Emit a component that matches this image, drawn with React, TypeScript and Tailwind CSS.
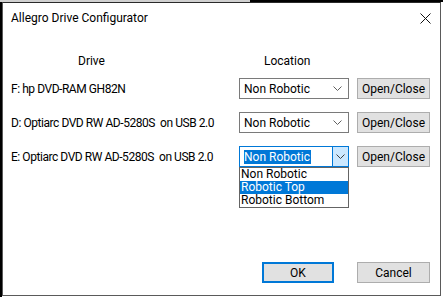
import React from 'react';

const drives = [
  { label: 'F: hp DVD-RAM GH82N', open: false },
  { label: 'D: Optiarc DVD RW AD-5280S  on USB 2.0', open: false },
  { label: 'E: Optiarc DVD RW AD-5280S  on USB 2.0', open: true },
];

const options = ['Non Robotic', 'Robotic Top', 'Robotic Bottom'];

function Chevron({ color = '#606060' }: { color?: string }) {
  return (
    <svg width="9" height="5" viewBox="0 0 9 5" fill="none">
      <path d="M0.5 0.5 L4.5 4.5 L8.5 0.5" stroke={color} strokeWidth="1" />
    </svg>
  );
}

function Combo({ open }: { open: boolean }) {
  if (!open) {
    return (
      <div className="w-[110px] h-[21px] border border-[#7a7a7a] bg-white flex items-center justify-between pl-[4px] pr-[6px]">
        <span>Non Robotic</span>
        <Chevron />
      </div>
    );
  }
  return (
    <div className="relative w-[110px] h-[21px]">
      <div className="w-full h-full border border-[#0078d7] bg-white flex items-center">
        <div className="flex-1 pl-[4px] flex items-center">
          <span className="bg-[#0078d7] text-white leading-[14px] pr-[1px]">Non Robotic</span>
        </div>
        <div className="w-[16px] h-full bg-[#cce8ff] border-l border-[#0078d7] flex items-center justify-center">
          <Chevron color="#404040" />
        </div>
      </div>
      <div className="absolute left-0 top-[21px] w-[110px] border border-[#646464] bg-white flex flex-col">
        {options.map((o, i) => (
          <div key={o} className={`h-[13px] leading-[13px] pl-[1px] ${i === 1 ? 'bg-[#0078d7] text-white' : ''}`}>{o}</div>
        ))}
      </div>
    </div>
  );
}

function Button({ label, def = false }: { label: string; def?: boolean }) {
  return (
    <div className={`h-[21px] flex items-center justify-center bg-[#e1e1e1] ${def ? 'w-[72px] border-2 border-[#0078d7]' : 'w-[73px] border border-[#adadad]'}`}>
      {label}
    </div>
  );
}

export default function App() {
  return (
    <div className="w-[443px] h-[297px] bg-white overflow-hidden text-[12px] text-black" style={{ fontFamily: 'Roboto, "Noto Sans", sans-serif' }}>
      <div className="flex h-[2px]">
        <div className="w-[250px] bg-[#d0d0d0]" />
        <div className="flex-1 bg-black" />
      </div>
      <div className="flex">
        <div className="w-[2px] h-[295px] bg-black" />
        <div className="w-[439px] h-[294px] border border-[#5a5a5a] border-t-[#2a2a2a] bg-white flex flex-col">
          <div className="h-[30px] flex items-center justify-between pl-[8px] pr-[9px]">
            <span>Allegro Drive Configurator</span>
            <svg width="11" height="11" viewBox="0 0 11 11">
              <path d="M0.5 0.5 L10.5 10.5 M10.5 0.5 L0.5 10.5" stroke="#111" strokeWidth="1" />
            </svg>
          </div>
          <div className="flex pt-[21px] leading-[14px]">
            <span className="ml-[75px]">Drive</span>
            <span className="ml-[159px]">Location</span>
          </div>
          <div className="flex flex-col gap-[13px] mt-[10px] pl-[8px]">
            {drives.map((d) => (
              <div key={d.label} className="flex items-center h-[21px]">
                <span className="w-[228px] whitespace-pre tracking-[-0.45px]">{d.label}</span>
                <Combo open={d.open} />
                <div className="ml-[8px]"><Button label="Open/Close" /></div>
              </div>
            ))}
          </div>
          <div className="flex-1" />
          <div className="flex gap-[23px] pl-[259px] pb-[12px]">
            <Button label="OK" def />
            <Button label="Cancel" />
          </div>
        </div>
      </div>
    </div>
  );
}
